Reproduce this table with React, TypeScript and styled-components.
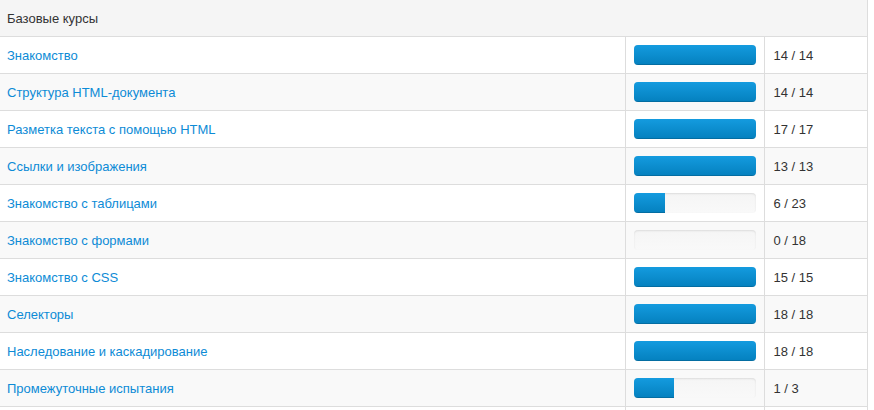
import React from 'react'
import styled, { createGlobalStyle } from 'styled-components'

const GlobalStyle = createGlobalStyle`
  body {
    margin: 0;
    background: #fff;
    font-family: "Liberation Sans", Arial, sans-serif;
    font-size: 13px;
    color: #333;
  }
`

const Table = styled.table`
  width: 868px;
  border-collapse: collapse;
  border-spacing: 0;
  border-right: 1px solid #ddd;
  table-layout: fixed;
`

const HeadCell = styled.th`
  background: #f5f5f5;
  text-align: left;
  font-weight: normal;
  padding: 9px 7px 7px;
  line-height: 20px;
  border-bottom: 1px solid #ddd;
`

const Row = styled.tr<{ $odd: boolean }>`
  background: ${p => (p.$odd ? '#f9f9f9' : '#fff')};
`

const Cell = styled.td`
  padding: 8px;
  line-height: 20px;
  height: 20px;
  border-bottom: 1px solid #ddd;
  vertical-align: middle;
  & + & {
    border-left: 1px solid #ddd;
  }
`

const TitleCell = styled(Cell)`
  padding: 9px 8px 7px 7px;
`

const CountCell = styled(Cell)`
  padding: 9px 8px 7px 9px;
`

const Link = styled.a`
  color: #0d8bd6;
  text-decoration: none;
`

const Progress = styled.div`
  height: 20px;
  border-radius: 4px;
  overflow: hidden;
  background: linear-gradient(to bottom, #f5f5f5, #f9f9f9);
  box-shadow: inset 0 1px 2px rgba(0, 0, 0, 0.1);
`

const Bar = styled.div`
  height: 100%;
  background: linear-gradient(to bottom, #149bdf, #0480be);
  box-shadow: inset 0 -1px 0 rgba(0, 0, 0, 0.15);
`

const courses: [string, number, number][] = [
  ['Знакомство', 14, 14],
  ['Структура HTML-документа', 14, 14],
  ['Разметка текста с помощью HTML', 17, 17],
  ['Ссылки и изображения', 13, 13],
  ['Знакомство с таблицами', 6, 23],
  ['Знакомство с формами', 0, 18],
  ['Знакомство с CSS', 15, 15],
  ['Селекторы', 18, 18],
  ['Наследование и каскадирование', 18, 18],
  ['Промежуточные испытания', 1, 3],
]

export default function App() {
  return (
    <>
      <GlobalStyle />
      <Table>
        <colgroup>
          <col style={{ width: 625 }} />
          <col style={{ width: 139 }} />
          <col />
        </colgroup>
        <thead>
          <tr>
            <HeadCell colSpan={3}>Базовые курсы</HeadCell>
          </tr>
        </thead>
        <tbody>
          {courses.map(([name, done, total], i) => (
            <Row key={name} $odd={i % 2 === 1}>
              <TitleCell>
                <Link href="#">{name}</Link>
              </TitleCell>
              <Cell>
                <Progress>
                  <Bar style={{ width: `${(done / total) * 100}%` }} />
                </Progress>
              </Cell>
              <CountCell>
                {done} / {total}
              </CountCell>
            </Row>
          ))}
          <Row $odd={false}>
            <TitleCell />
            <Cell />
            <CountCell />
          </Row>
        </tbody>
      </Table>
    </>
  )
}
